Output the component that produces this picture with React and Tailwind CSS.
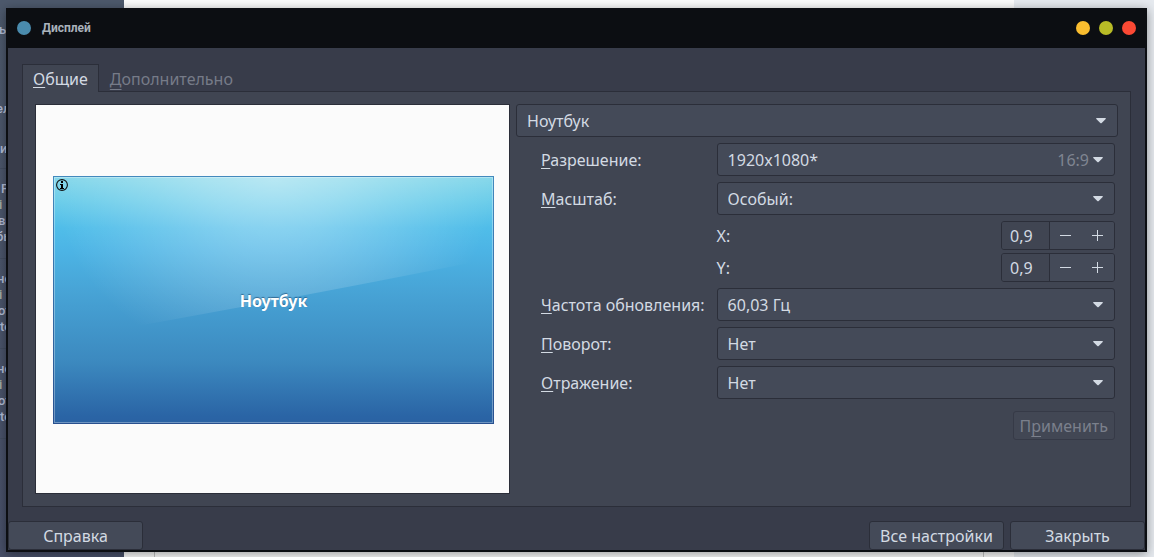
import { useState } from "react";

const FONT = "font-['Noto_Sans','Open_Sans',sans-serif]";

const SIDEBAR_ITEMS = [
  { id: 1, size: "h-[93px] pt-[22px]", lines: ["ь"] },
  { id: 2, size: "h-10 pt-2", lines: ["ел"] },
  { id: 3, size: "h-9 pt-2 border-b", lines: ["и"] },
  { id: 4, size: "h-[90px] pt-3 border-b", lines: ["Р", "і", "во", "бь"] },
  { id: 5, size: "h-[90px] pt-3 border-b", lines: ["не", "і", "от", "te"] },
  { id: 6, size: "h-[90px] pt-3 border-b", lines: ["не", "і", "от", "te"] },
];

const LINE_STYLE = {
  "ь": "-ml-px",
  "ел": "-ml-1",
  "и": "ml-0",
  "Р": "ml-px",
  "і": "-ml-px text-[#a9b1a6]",
  "во": "-ml-[2px]",
  "бь": "-ml-1",
  "не": "-ml-[3px]",
  "от": "-ml-[2px]",
  te: "ml-0",
};

// Application window that sits behind the dialog
function Backdrop() {
  return (
    <div aria-hidden="true" className="absolute inset-0 flex overflow-hidden bg-[#fbfbfb]">
      <div className="w-[124px] shrink-0 bg-linear-to-b from-[#4d596c] to-[#485069] font-['Roboto',sans-serif] text-[13px] leading-4 font-medium text-[#b4bdd6]">
        {SIDEBAR_ITEMS.map((item) => (
          <div key={item.id} className={`border-[#434d60] ${item.size}`}>
            {item.lines.map((line) => (
              <div key={line} className={`h-4 whitespace-nowrap ${LINE_STYLE[line]}`}>
                {line}
              </div>
            ))}
          </div>
        ))}
      </div>
      <div className="flex flex-1 px-[30px] pt-5">
        <div className="flex-1 border-x border-[#c4c4c4]" />
      </div>
      <div className="w-[140px] shrink-0 bg-[#e6eaef]" />
    </div>
  );
}

// Underlined access key followed by the rest of the caption
function Mnemonic({ text, at = 0, low = false }) {
  return (
    <>
      {text.slice(0, at)}
      <span
        className={`underline decoration-1 [text-decoration-skip-ink:none] ${
          low ? "underline-offset-4" : "underline-offset-2"
        }`}
      >
        {text[at]}
      </span>
      {text.slice(at + 1)}
    </>
  );
}

function Combo({ id, label, options, hint }) {
  return (
    <div className="relative">
      <select
        id={id}
        aria-label={label}
        className="block h-[33px] w-full appearance-none rounded-[3px] border border-[#2b2e39] bg-[#444a58] pr-8 pl-[10px] text-[#d3dae3] outline-none"
      >
        {options.map((option) => (
          <option key={option}>{option}</option>
        ))}
      </select>
      <div className="pointer-events-none absolute inset-y-0 right-3 flex items-center gap-1">
        {hint && <span className="text-[#7f8591]">{hint}</span>}
        <svg width="10" height="6" viewBox="0 0 10 6" fill="#d3dae3">
          <path d="M0.8 0h8.4c.7 0 .9.6.5 1L5.7 5c-.4.4-1 .4-1.4 0L.3 1C-.1.6.1 0 .8 0z" />
        </svg>
      </div>
    </div>
  );
}

function Spin({ id, label }) {
  const [value, setValue] = useState(9);
  const button = "flex w-8 items-center justify-center bg-[#444a58] pr-px";

  return (
    <div className="flex items-center justify-between">
      <label htmlFor={id}>{label}</label>
      <div className="flex h-[29px] overflow-hidden rounded-[3px] border border-[#2b2e39]">
        <input
          id={id}
          value={(value / 10).toFixed(1).replace(".", ",")}
          readOnly
          className="w-12 border-r border-[#2b2e39] bg-[#404552] pl-2 outline-none"
        />
        <button aria-label={`${label} −`} onClick={() => setValue(value - 1)} className={button}>
          <svg width="11" height="11" viewBox="0 0 11 11" fill="#d3dae3">
            <path d="M0 5h11v1H0z" />
          </svg>
        </button>
        <button aria-label={`${label} +`} onClick={() => setValue(value + 1)} className={button}>
          <svg width="11" height="11" viewBox="0 0 11 11" fill="#d3dae3">
            <path d="M0 5h11v1H0zM5 0h1v11H5z" />
          </svg>
        </button>
      </div>
    </div>
  );
}

function Field({ id, label, options, hint }) {
  return (
    <>
      <label htmlFor={id} className="self-center whitespace-nowrap">
        <Mnemonic text={label} />
      </label>
      <Combo id={id} options={options} hint={hint} />
    </>
  );
}

function ScreenPreview() {
  return (
    <div className="flex items-center border border-[#2b2e39] bg-[#fbfbfb] pt-[2px] pr-[15px] pl-[17px]">
      <div className="relative aspect-[441/248] w-full">
        <svg className="block size-full" viewBox="0 0 441 248" preserveAspectRatio="none">
          <defs>
            <linearGradient id="sky" x1="0" y1="0" x2="0" y2="1">
              <stop offset="0" stopColor="#88d8ea" />
              <stop offset="0.1" stopColor="#6ccdea" />
              <stop offset="0.21" stopColor="#50bde9" />
              <stop offset="0.3" stopColor="#4cb4e5" />
              <stop offset="0.45" stopColor="#48a5d7" />
              <stop offset="0.75" stopColor="#3c89bf" />
              <stop offset="0.97" stopColor="#2a64a5" />
              <stop offset="1" stopColor="#2a62a3" />
            </linearGradient>
            <radialGradient id="glow" gradientUnits="userSpaceOnUse" cx="0" cy="0" r="1" gradientTransform="translate(221 0) scale(222 190)">
              <stop offset="0" stopColor="#fff" stopOpacity="0.42" />
              <stop offset="0.3" stopColor="#fff" stopOpacity="0.31" />
              <stop offset="0.55" stopColor="#fff" stopOpacity="0.19" />
              <stop offset="0.8" stopColor="#fff" stopOpacity="0.08" />
              <stop offset="1" stopColor="#fff" stopOpacity="0" />
            </radialGradient>
            <linearGradient id="edge" x1="0" y1="0" x2="0" y2="1">
              <stop offset="0" stopColor="#4389bd" />
              <stop offset="1" stopColor="#28508f" />
            </linearGradient>
          </defs>
          <rect width="441" height="248" fill="url(#sky)" />
          <path d="M0 0h441v82Q260 119 0 165z" fill="url(#glow)" />
          <rect x="1.5" y="1.5" width="438" height="245" fill="none" stroke="#fff" strokeOpacity="0.32" />
          <rect x="0.5" y="0.5" width="440" height="247" fill="none" stroke="url(#edge)" />
        </svg>
        <svg className="absolute top-[3px] left-[3px]" width="12" height="12" viewBox="0 0 12 12">
          <circle cx="6" cy="6" r="5.4" fill="none" stroke="#111" strokeWidth="1.1" />
          <path d="M5 2h2v2H5zM5 5h2v4h1v1H4V9h1V6H4V5z" fill="#000" />
        </svg>
        <div className="absolute inset-0 flex items-center justify-center pt-[2px] font-bold text-white [text-shadow:0_-1px_1px_rgb(20_60_100/0.6)]">
          Ноутбук
        </div>
      </div>
    </div>
  );
}

function ActionButton({ children }) {
  return (
    <button className="h-[29px] w-[135px] rounded-[3px] border border-[#2b2e39] bg-[#444a58]">
      {children}
    </button>
  );
}

function TitleBar() {
  return (
    <header className="flex h-10 items-center bg-[#0c0e12] px-[11px]">
      <span className="size-[14px] rounded-full bg-[#4a8bad]" />
      <h1 className="ml-[11px] flex-1 font-['Roboto',sans-serif] text-[12px] font-bold text-[#a9b1bb]">
        Дисплей
      </h1>
      <div className="flex gap-[9px]">
        <button aria-label="Свернуть" className="size-[14px] rounded-full bg-[#fabd2f]" />
        <button aria-label="Развернуть" className="size-[14px] rounded-full bg-[#b8bb26]" />
        <button aria-label="Закрыть окно" className="size-[14px] rounded-full bg-[#fb4934]" />
      </div>
    </header>
  );
}

export default function App() {
  return (
    <div className={`relative flex min-h-screen pt-2 pr-[7px] pb-[5px] pl-[6px] text-base text-[#d3dae3] ${FONT}`}>
      <Backdrop />

      <main className="relative flex flex-1 flex-col bg-[#0c0e12] shadow-[0_2px_10px_rgb(0_0_0/0.4)]">
        <TitleBar />

        <div className="mx-[2px] mb-[2px] flex flex-1 flex-col bg-[#383c4a]">
          <div className="flex flex-1 flex-col px-[14px] pt-4 pb-[14px]">
            {/* Tabs */}
            <div role="tablist" className="relative z-10 -mb-px flex h-7">
              <button role="tab" aria-selected="true" className="border border-b-0 border-[#2b2e39] bg-[#404552] px-[10px]">
                <Mnemonic text="Общие" />
              </button>
              <button role="tab" aria-selected="false" className="border border-b-0 border-transparent px-[10px] text-[#767b88]">
                <Mnemonic text="Дополнительно" low />
              </button>
            </div>

            <section className="grid flex-1 grid-cols-[475fr_602fr] gap-[6px] border border-[#2b2e39] bg-[#404552] p-3">
              <ScreenPreview />

              {/* Settings */}
              <div className="flex flex-col gap-[6px]">
                <Combo id="output" label="Экран" options={["Ноутбук"]} />

                <div className="grid grid-cols-[auto_1fr] gap-x-3 gap-y-[6px] pr-[3px] pl-[25px]">
                  <Field id="resolution" label="Разрешение:" options={["1920x1080*"]} hint="16:9" />
                  <Field id="scale" label="Масштаб:" options={["Особый:"]} />
                  <div className="col-start-2 flex flex-col gap-[3px]">
                    <Spin id="scale-x" label="X:" />
                    <Spin id="scale-y" label="Y:" />
                  </div>
                  <Field id="rate" label="Частота обновления:" options={["60,03 Гц"]} />
                  <Field id="rotation" label="Поворот:" options={["Нет"]} />
                  <Field id="reflection" label="Отражение:" options={["Нет"]} />
                </div>

                <div className="flex justify-end pt-[6px] pr-[3px]">
                  <button disabled className="h-[29px] rounded-[3px] border border-[#363a47] bg-[#424754] px-[6px] text-[#7b808c]">
                    <Mnemonic text="Применить" at={1} low />
                  </button>
                </div>
              </div>
            </section>
          </div>

          <footer className="flex gap-[6px]">
            <div className="flex-1">
              <ActionButton>Справка</ActionButton>
            </div>
            <ActionButton>Все настройки</ActionButton>
            <ActionButton>Закрыть</ActionButton>
          </footer>
        </div>
      </main>
    </div>
  );
}
